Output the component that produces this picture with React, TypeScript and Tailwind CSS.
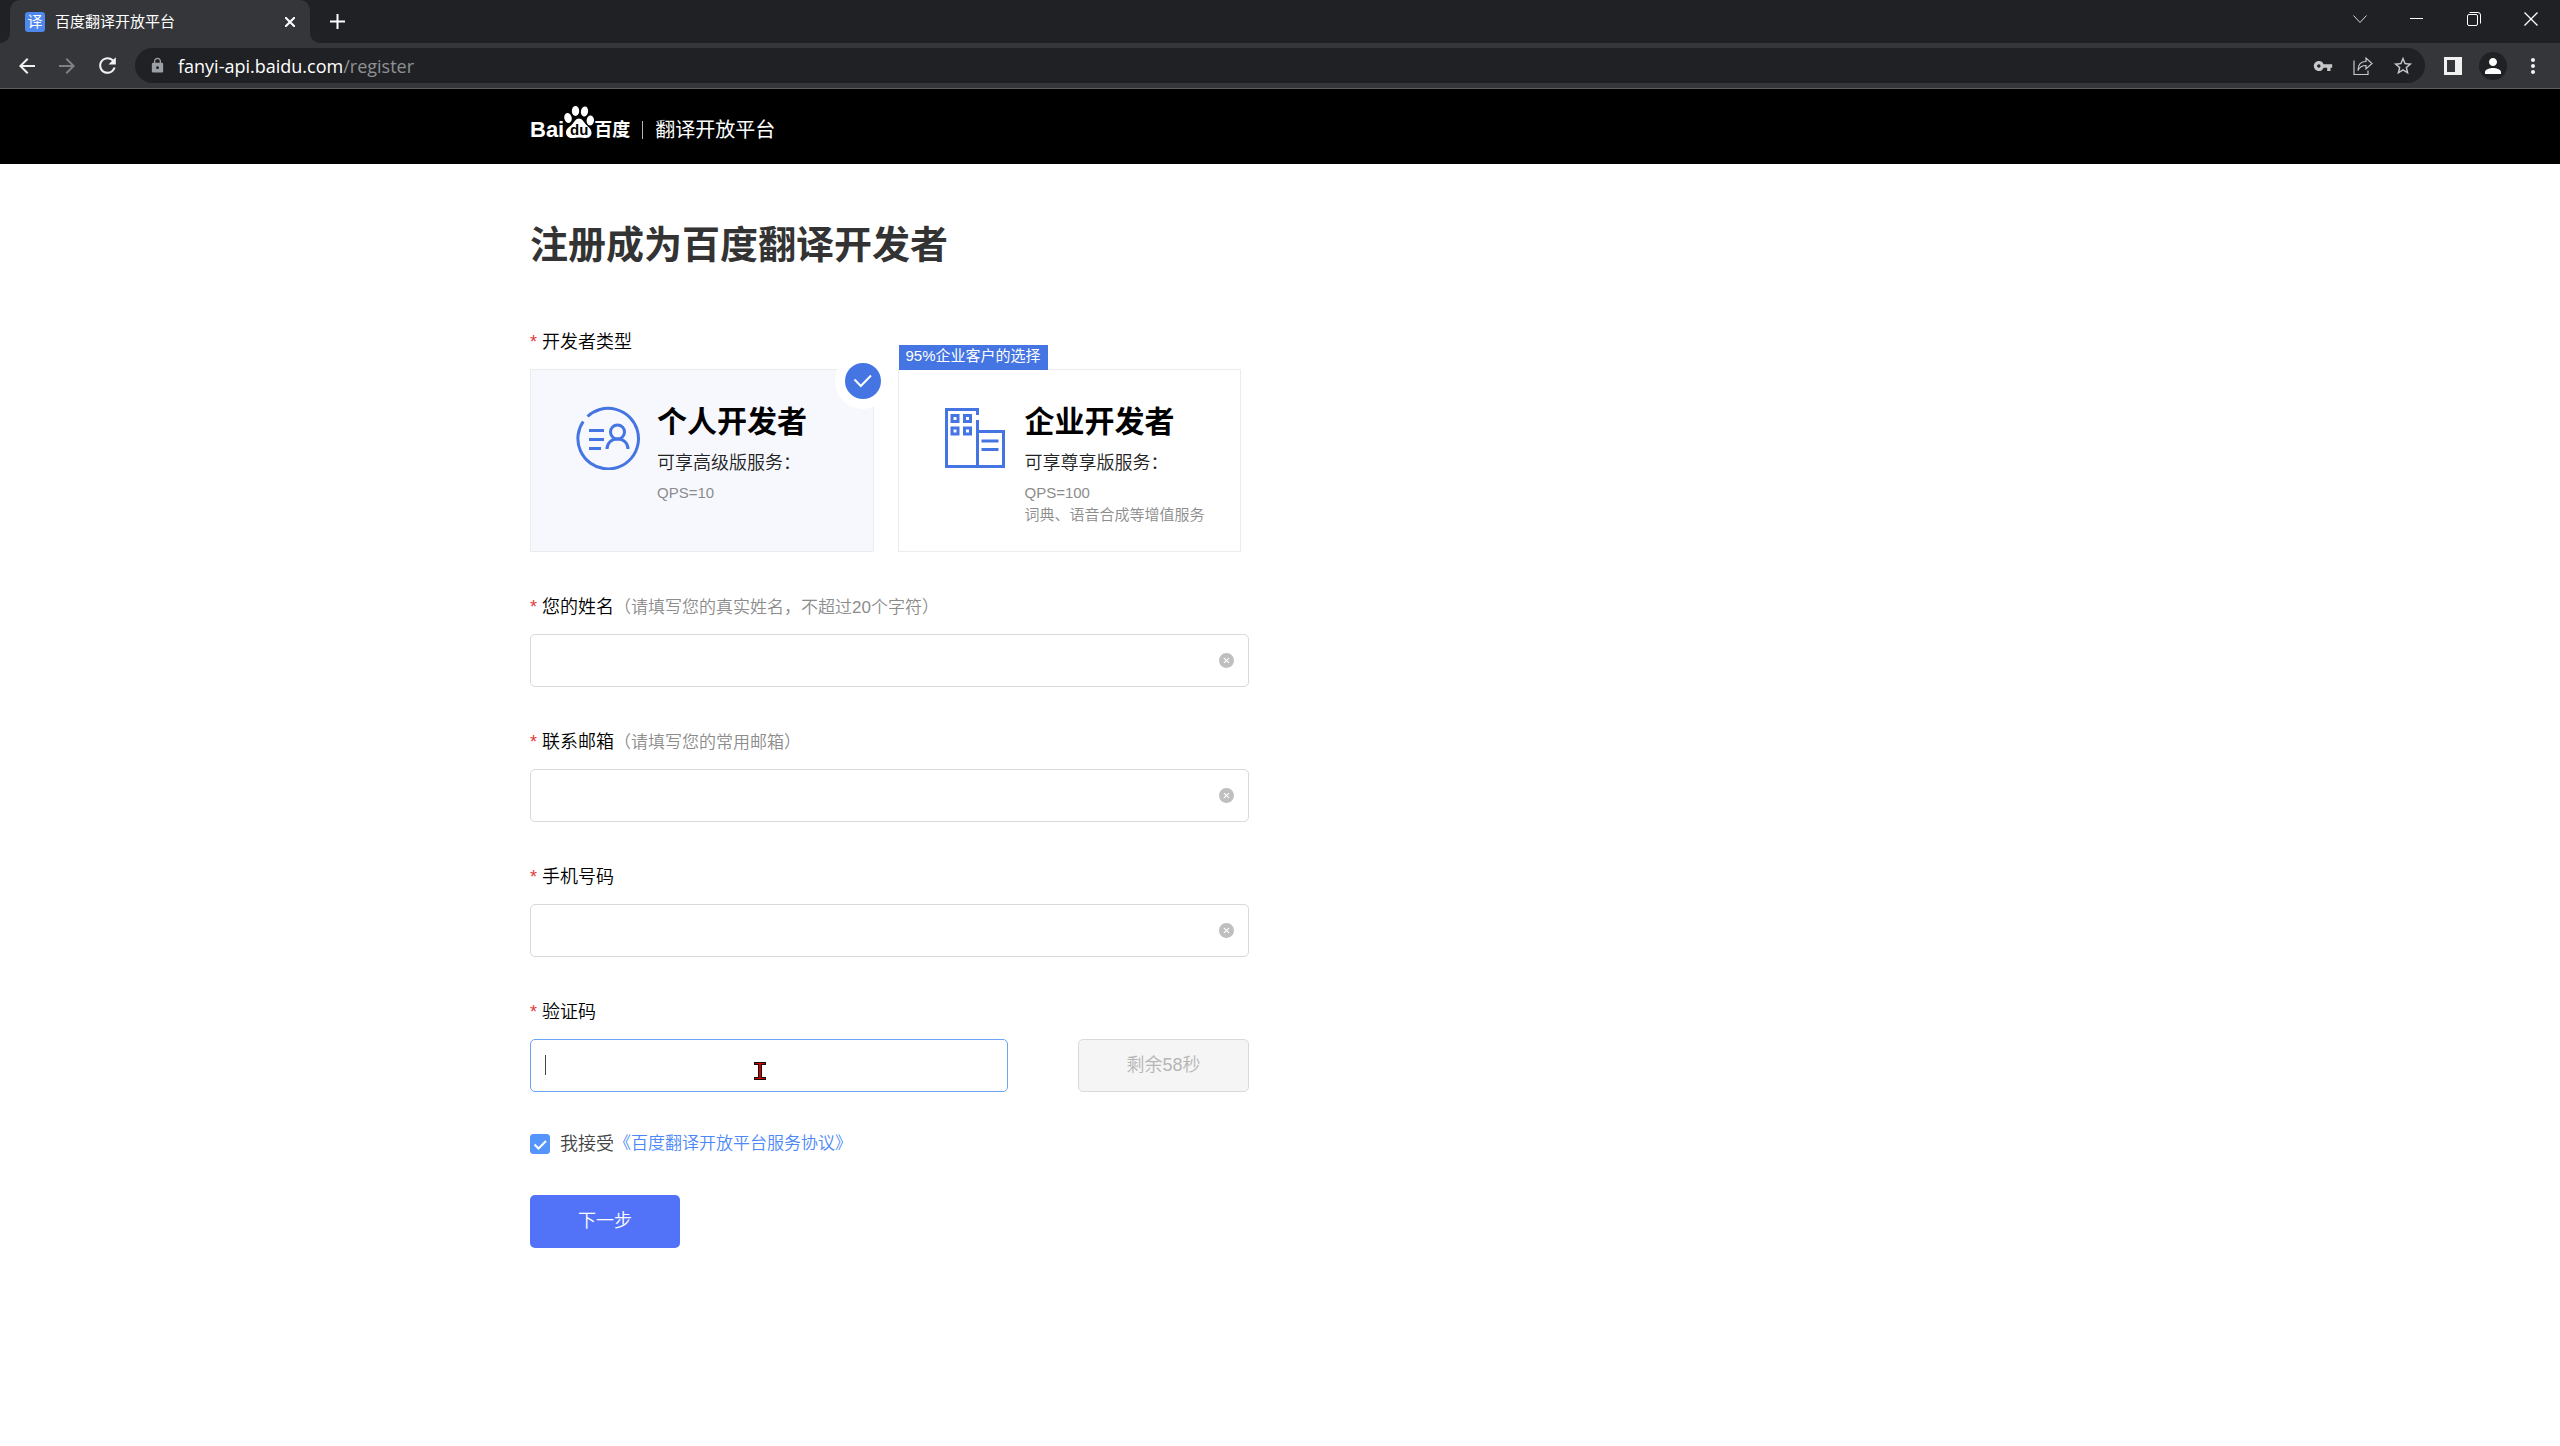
import { useState } from "react";
import type { ReactNode } from "react";
import {
  MdArrowBack,
  MdArrowForward,
  MdRefresh,
  MdLock,
  MdVpnKey,
  MdStarBorder,
  MdPerson,
  MdMoreVert,
} from "react-icons/md";
import { AiFillCloseCircle } from "react-icons/ai";

function TabStrip() {
  return (
    <div className="flex h-[43px] items-stretch bg-[#202124] pr-px pl-[10px] text-white">
      <div className="relative flex w-[300px] items-center rounded-t-[10px] bg-[#35363a] pr-[10px] pl-[15px]">
        <svg className="absolute bottom-0 -left-[10px] h-[10px] w-[10px]" viewBox="0 0 10 10" fill="#35363a">
          <path d="M10 0v10H0A10 10 0 0 0 10 0z" />
        </svg>
        <svg className="absolute -right-[10px] bottom-0 h-[10px] w-[10px]" viewBox="0 0 10 10" fill="#35363a">
          <path d="M0 0v10h10A10 10 0 0 1 0 0z" />
        </svg>
        <span className="flex h-5 w-5 items-center justify-center rounded-[3px] bg-[#4e87ee] text-[15px] leading-5">
          译
        </span>
        <span className="ml-[10px] flex-1 text-[15px] leading-5">百度翻译开放平台</span>
        <button type="button" aria-label="关闭标签页" className="flex h-5 w-5 items-center justify-center">
          <svg className="h-[10px] w-[10px]" viewBox="0 0 10 10" stroke="currentColor" strokeWidth="2">
            <path d="M0 0l10 10M10 0L0 10" />
          </svg>
        </button>
      </div>
      <button type="button" aria-label="新标签页" className="ml-[17px] flex w-5 items-center justify-center">
        <svg className="h-[15px] w-[15px]" viewBox="0 0 15 15" stroke="currentColor" strokeWidth="2">
          <path d="M7.5 0v15M0 7.5h15" />
        </svg>
      </button>
      <div className="ml-auto flex h-[37px]">
        <button type="button" aria-label="搜索标签页" className="flex w-[57px] items-center justify-center">
          <svg className="h-[14px] w-[14px]" viewBox="0 0 14 14" fill="none" stroke="#d6d7d9">
            <path d="M.5 3.500l6.500 7 6.500-7" />
          </svg>
        </button>
        <button type="button" aria-label="最小化" className="flex w-[57px] items-center justify-center">
          <span className="h-px w-[13px] bg-white" />
        </button>
        <button type="button" aria-label="还原" className="flex w-[57px] items-center justify-center">
          <svg className="h-[14px] w-[14px]" viewBox="0 0 14 14" fill="none" stroke="#fff">
            <rect x=".5" y="2.500" width="10" height="11" rx="1.500" />
            <path d="M2.500 .5h8.500a2.500 2.500 0 0 1 2.500 2.500v8.500" />
          </svg>
        </button>
        <button type="button" aria-label="关闭" className="flex w-[57px] items-center justify-center">
          <svg className="h-[14px] w-[14px]" viewBox="0 0 14 14" stroke="#fff" strokeWidth="1.300">
            <path d="M.5 .5l13 13M13.500 .5l-13 13" />
          </svg>
        </button>
      </div>
    </div>
  );
}

function BarButton({ label, children }: { label: string; children: ReactNode }) {
  return (
    <button type="button" aria-label={label} className="flex h-[35px] w-10 shrink-0 items-center justify-center">
      {children}
    </button>
  );
}

function Toolbar() {
  return (
    <div className="flex h-[46px] items-center border-b border-[#5d5e61] bg-[#35363a] px-[7px] text-[#f1f1f2]">
      <BarButton label="后退">
        <MdArrowBack size={24} />
      </BarButton>
      <BarButton label="前进">
        <MdArrowForward size={24} color="#808184" />
      </BarButton>
      <BarButton label="重新加载">
        <MdRefresh size={25} />
      </BarButton>
      <div className="mx-2 flex h-[35px] flex-1 items-center rounded-full bg-[#202124] pr-[2px] pl-[14px]">
        <MdLock size={17} color="#9aa0a6" />
        <p className="ml-3 flex-1 font-['Open_Sans','Noto_Sans',sans-serif] text-[18px] leading-6 text-[#8f9195]">
          <span className="text-white">fanyi-api.baidu.com</span>/register
        </p>
        <BarButton label="密码">
          <MdVpnKey size={20} color="#c6c7c9" />
        </BarButton>
        <BarButton label="分享">
          <svg className="h-5 w-5" viewBox="0 0 20 20" fill="none" stroke="#c6c7c9" strokeWidth="1.200">
            <path d="M1 4.500v14h14v-4" />
            <path d="M5 14.500c0-6 3-9 8-9V2l6 5.500-6 5.500V9.500c-4 0-6.500 1.500-8 5z" />
          </svg>
        </BarButton>
        <BarButton label="收藏">
          <MdStarBorder size={22} color="#c6c7c9" />
        </BarButton>
      </div>
      <BarButton label="侧边栏">
        <svg className="h-[18px] w-[18px]" viewBox="0 0 18 18" fill="#f1f1f2" fillRule="evenodd">
          <path d="M0 0h18v18H0zM3 3v12h8V3z" />
        </svg>
      </BarButton>
      <BarButton label="用户">
        <span className="flex h-7 w-7 items-center justify-center rounded-full bg-[#202124]">
          <MdPerson size={24} color="#fff" />
        </span>
      </BarButton>
      <BarButton label="更多">
        <MdMoreVert size={24} />
      </BarButton>
    </div>
  );
}

function SiteHeader() {
  return (
    <header className="h-[75px] bg-black text-white">
      <div className="mx-auto flex h-full max-w-[1500px] items-center pt-1.5">
        <a href="/" className="flex items-center">
          <span className="font-['Liberation_Sans',sans-serif] text-[22px] leading-7 font-bold">Bai</span>
          <svg className="mb-4 h-[34px] w-[30px]" viewBox="0 0 30 34" fill="#fff">
            <ellipse cx="4" cy="13" rx="3.700" ry="5" transform="rotate(-12 4 13)" />
            <ellipse cx="11.500" cy="6" rx="3.700" ry="5" />
            <ellipse cx="20.500" cy="6.500" rx="3.600" ry="5" transform="rotate(10 20.500 6.500)" />
            <ellipse cx="26.300" cy="15.500" rx="3.700" ry="5" transform="rotate(5 26.300 15.500)" />
            <path d="M15 13.500c3 0 4.500 3 6.500 5.500 2.500 3 6 4.500 6 8.800 0 3.200-2.500 5.200-5.500 5.200-2.500 0-4.500-.6-7-.6s-4 .6-6.500 .6c-4 0-6.500-2.500-6.500-5.600 0-4.200 4-5.400 6.500-8.400 2-2.500 3.500-5.500 6.500-5.500z" />
            <text x="6" y="30" fill="#000" fontSize="15" fontWeight="700" fontFamily="Liberation Sans, sans-serif">
              du
            </text>
          </svg>
          <span className="text-[18px] leading-7 font-bold">百度</span>
          <span className="mx-3 h-[18px] w-px bg-[#b5b5b5]" />
          <span className="text-[20px] leading-7">翻译开放平台</span>
        </a>
      </div>
    </header>
  );
}

function FieldLabel({ text, hint, htmlFor }: { text: string; hint?: string; htmlFor?: string }) {
  const body = (
    <>
      <span className="w-3 font-['Liberation_Sans',sans-serif] text-[#e0393c]">*</span>
      <span>{text}</span>
      {hint && <span className="text-[17px] text-[#8c8c8c]">{hint}</span>}
    </>
  );
  const style = "mb-[13px] flex text-[18px] leading-[27px] font-[350] text-black";
  return htmlFor ? (
    <label htmlFor={htmlFor} className={style}>
      {body}
    </label>
  ) : (
    <div className={style}>{body}</div>
  );
}

function PersonIcon() {
  return (
    <svg className="h-16 w-16" viewBox="0 0 64 64" fill="none" stroke="#4475e2" strokeWidth="3">
      <path d="M11.500 10.500A30.300 30.300 0 1 1 7.200 15.500" />
      <path d="M13 24.500h15M13 33.500h15M13 42.500h12" />
      <circle cx="41.500" cy="26" r="7" />
      <path d="M31 43c0-6 4.500-10 10.500-10S52 37 52 43" />
    </svg>
  );
}

function CompanyIcon() {
  return (
    <svg className="h-16 w-16" viewBox="1 0 64 64" fill="none" stroke="#4475e2" strokeWidth="3">
      <path d="M34.500 9V3.500H3.500v57h57V25.500h-26" />
      <path d="M34.500 14v46" />
      <path d="M9 9.500h6v6H9zM21.500 9.500h6v6h-6zM9 22h6v6H9zM21.500 22h6v6h-6z" />
      <path d="M38.500 35h17M38.500 43.500h17" />
    </svg>
  );
}

function TypeCard({
  name,
  service,
  perks,
  icon,
  badge,
  checked,
  onSelect,
}: {
  name: string;
  service: string;
  perks: string[];
  icon: ReactNode;
  badge?: string;
  checked: boolean;
  onSelect: () => void;
}) {
  return (
    <label
      className={
        checked
          ? "relative flex h-[183px] flex-1 gap-[17px] border border-[#ececee] bg-[#f7f8fe] pt-[32px] pl-[45px]"
          : "relative flex h-[183px] flex-1 gap-[17px] border border-[#ececee] bg-white pt-[32px] pl-[45px]"
      }
    >
      <input type="radio" name="developer" className="sr-only" checked={checked} onChange={onSelect} />
      {badge && (
        <span className="absolute -top-[25px] left-0 h-[25px] bg-[#4475e2] px-[7px] text-[15px] leading-[22px] text-white">
          {badge}
        </span>
      )}
      {checked && (
        <span className="absolute -top-[17px] -right-[18px] rounded-full bg-white p-[10px]">
          <svg className="h-9 w-9 rounded-full bg-[#4475e2]" viewBox="0 0 36 36" fill="none" stroke="#fff" strokeWidth="2">
            <path d="M9.500 16.500l6.300 6.500L26 12.500" />
          </svg>
        </span>
      )}
      <span className="pt-1">{icon}</span>
      <span className="flex flex-col">
        <span className="text-[30px] leading-[40px] font-bold text-black">{name}</span>
        <span className="mt-2 mb-[5px] text-[18px] leading-[27px] font-[350] text-[#222]">{service}</span>
        {perks.map((perk) => (
          <span key={perk} className="text-[15px] leading-[22px] font-[350] text-[#8c8c8c]">
            {perk}
          </span>
        ))}
      </span>
    </label>
  );
}

function TextField({ id, label, hint }: { id: string; label: string; hint?: string }) {
  return (
    <div className="mb-[42px]">
      <FieldLabel htmlFor={id} text={label} hint={hint} />
      <div className="flex h-[53px] items-center rounded-[5px] border border-[#d9d9d9] pr-[13px]">
        <input id={id} type="text" className="h-full min-w-0 flex-1 px-[14px] text-[18px] outline-none" />
        <button type="button" aria-label="清除">
          <AiFillCloseCircle size={17} color="#bfbfbf" />
        </button>
      </div>
    </div>
  );
}

function CodeField() {
  return (
    <div className="mb-[42px]">
      <FieldLabel htmlFor="code" text="验证码" />
      <div className="flex h-[53px] gap-[70px]">
        <div className="relative flex-1">
          <input
            id="code"
            type="text"
            className="h-full w-full rounded-[5px] border border-[#6ba3f5] px-[14px] text-[18px] outline-none"
          />
          <span className="absolute top-4 left-[15px] h-5 w-px bg-[#444]" />
          <svg className="absolute top-[23px] left-[224px] h-[18px] w-[12px]" viewBox="0 0 12 18">
            <path d="M0 0h12v3H8v12h4v3H0v-3h4V3H0z" fill="#111" />
            <path d="M1 1h10v1H7v14h4v1H1v-1h4V2H1z" fill="#d40000" />
          </svg>
        </div>
        <button
          type="button"
          disabled
          className="w-[171px] rounded-[5px] border border-[#d9d9d9] bg-[#f5f5f5] text-[18px] font-[350] text-[#b5b5b5]"
        >
          剩余58秒
        </button>
      </div>
    </div>
  );
}

function RegisterForm() {
  const [type, setType] = useState("personal");
  const [accepted, setAccepted] = useState(true);
  return (
    <form className="max-w-[719px]" onSubmit={(e) => e.preventDefault()}>
      <FieldLabel text="开发者类型" />
      <div className="mb-[42px] flex gap-6 pr-2">
        <TypeCard
          name="个人开发者"
          service="可享高级版服务："
          perks={["QPS=10"]}
          icon={<PersonIcon />}
          checked={type === "personal"}
          onSelect={() => setType("personal")}
        />
        <TypeCard
          name="企业开发者"
          service="可享尊享版服务："
          perks={["QPS=100", "词典、语音合成等增值服务"]}
          icon={<CompanyIcon />}
          badge="95%企业客户的选择"
          checked={type === "company"}
          onSelect={() => setType("company")}
        />
      </div>
      <TextField id="name" label="您的姓名" hint="（请填写您的真实姓名，不超过20个字符）" />
      <TextField id="email" label="联系邮箱" hint="（请填写您的常用邮箱）" />
      <TextField id="phone" label="手机号码" />
      <CodeField />
      <div className="mb-[41px] flex h-5 items-center text-[18px] font-[350] text-[#444]">
        <span className="relative mr-[10px] h-5 w-5">
          <input
            id="accept"
            type="checkbox"
            checked={accepted}
            onChange={(e) => setAccepted(e.target.checked)}
            className="block h-5 w-5 appearance-none rounded-[3px] border border-[#5595fb] checked:bg-[#5595fb]"
          />
          {accepted && (
            <svg
              className="pointer-events-none absolute inset-0 h-5 w-5"
              viewBox="0 0 20 20"
              fill="none"
              stroke="#fff"
              strokeWidth="2"
            >
              <path d="M4.500 10.500l4 4L16 7" />
            </svg>
          )}
        </span>
        <label htmlFor="accept">我接受</label>
        <a href="#agreement" className="text-[17px] text-[#4c88f7]">
          《百度翻译开放平台服务协议》
        </a>
      </div>
      <button type="submit" className="h-[53px] w-[150px] rounded-[5px] bg-[#5273f8] text-[18px] font-[350] text-white">
        下一步
      </button>
    </form>
  );
}

export default function App() {
  return (
    <div className="min-h-screen bg-white font-['Liberation_Sans','Noto_Sans_CJK_SC',sans-serif]" lang="zh-CN">
      <TabStrip />
      <Toolbar />
      <SiteHeader />
      <main className="mx-auto max-w-[1500px] pt-[55px]">
        <h1 className="mb-[58px] text-[38px] leading-[52px] font-bold text-[#333]">注册成为百度翻译开发者</h1>
        <RegisterForm />
      </main>
    </div>
  );
}
